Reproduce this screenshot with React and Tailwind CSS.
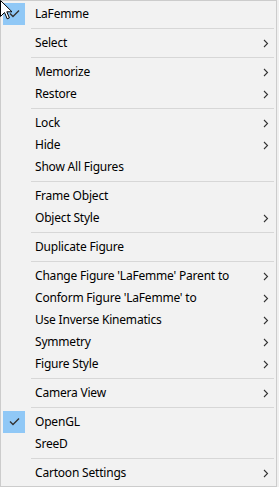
import React from "react";

const items = [
  { label: "LaFemme", checked: true, cursor: true },
  "sep",
  { label: "Select", sub: true },
  "sep",
  { label: "Memorize", sub: true },
  { label: "Restore", sub: true },
  "sep",
  { label: "Lock", sub: true },
  { label: "Hide", sub: true },
  { label: "Show All Figures" },
  "sep",
  { label: "Frame Object" },
  { label: "Object Style", sub: true },
  "sep",
  { label: "Duplicate Figure" },
  "sep",
  { label: "Change Figure 'LaFemme' Parent to", sub: true },
  { label: "Conform Figure 'LaFemme' to", sub: true },
  { label: "Use Inverse Kinematics", sub: true },
  { label: "Symmetry", sub: true },
  { label: "Figure Style", sub: true },
  "sep",
  { label: "Camera View", sub: true },
  "sep",
  { label: "OpenGL", checked: true },
  { label: "SreeD" },
  "sep",
  { label: "Cartoon Settings", sub: true },
];

function Check() {
  return (
    <div className="w-[22px] h-[22px] bg-[#90c8f6] flex items-center justify-center">
      <svg width="22" height="22" viewBox="0 0 22 22">
        <path d="M7 10.5 L10 13.5 L16 7.5" fill="none" stroke="#333" strokeWidth="1.4" />
      </svg>
    </div>
  );
}

function Chevron() {
  return (
    <svg width="6" height="9" viewBox="0 0 6 9" className="block">
      <path d="M1 1 L4.5 4.5 L1 8" fill="none" stroke="#333" strokeWidth="1.1" />
    </svg>
  );
}

export default function App() {
  return (
    <div
      className="w-[279px] h-[487px] bg-[#f0f0f0] relative"
      style={{ fontFamily: '"Noto Sans", "Open Sans", sans-serif' }}
    >
      <div className="w-[277px] h-[487px] border border-[#cccccc] bg-[#f2f2f2] p-[2px] flex flex-col">
        {items.map((it, i) =>
          it === "sep" ? (
            <div key={i} className="h-[7px] flex items-center pl-[28px] pr-[0px]">
              <div className="h-px w-full bg-[#d7d7d7]" />
            </div>
          ) : (
            <div key={i} className="h-[22px] flex items-center text-[12px] text-black">
              <div className="w-[22px] h-[22px] shrink-0">{it.checked ? <Check /> : null}</div>
              <div className="pl-[10px] flex-1 leading-none whitespace-nowrap tracking-[-0.2px]">{it.label}</div>
              <div className="w-[8px] mr-[3px] shrink-0 flex items-center justify-start">
                {it.sub ? <Chevron /> : null}
              </div>
            </div>
          )
        )}
      </div>
      <svg
        className="absolute left-0 top-0"
        width="13"
        height="20"
        viewBox="0 0 13 20"
      >
        <path
          d="M0.5 0.5 L0.5 16.5 L4.5 12.5 L7.2 18.8 L9.4 17.9 L6.8 11.8 L12 11.8 Z"
          fill="#fff"
          stroke="#000"
          strokeWidth="1"
          strokeLinejoin="miter"
        />
      </svg>
    </div>
  );
}
